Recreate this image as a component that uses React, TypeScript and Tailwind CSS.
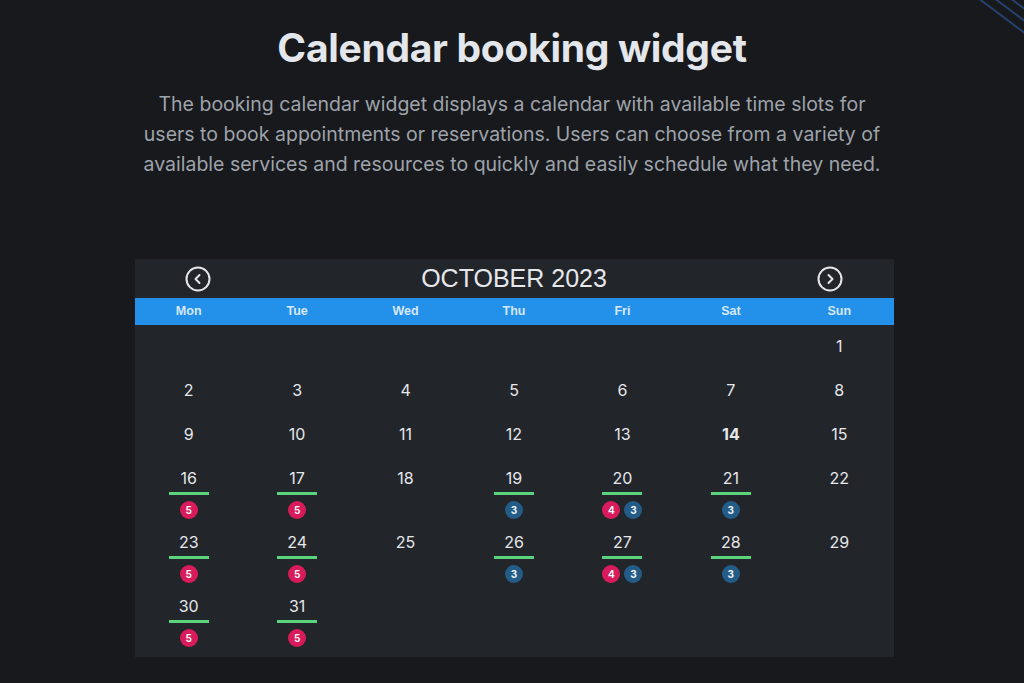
import React from 'react';

type Day = {
  n: number;
  pink?: number;
  blue?: number;
  bar?: boolean;
  bold?: boolean;
};

const weekDays = ['Mon', 'Tue', 'Wed', 'Thu', 'Fri', 'Sat', 'Sun'];

// octobre 2023 commence un dimanche
const weeks: (Day | null)[][] = [
  [null, null, null, null, null, null, { n: 1 }],
  [{ n: 2 }, { n: 3 }, { n: 4 }, { n: 5 }, { n: 6 }, { n: 7 }, { n: 8 }],
  [{ n: 9 }, { n: 10 }, { n: 11 }, { n: 12 }, { n: 13 }, { n: 14, bold: true }, { n: 15 }],
  [
    { n: 16, bar: true, pink: 5 },
    { n: 17, bar: true, pink: 5 },
    { n: 18 },
    { n: 19, bar: true, blue: 3 },
    { n: 20, bar: true, pink: 4, blue: 3 },
    { n: 21, bar: true, blue: 3 },
    { n: 22 },
  ],
  [
    { n: 23, bar: true, pink: 5 },
    { n: 24, bar: true, pink: 5 },
    { n: 25 },
    { n: 26, bar: true, blue: 3 },
    { n: 27, bar: true, pink: 4, blue: 3 },
    { n: 28, bar: true, blue: 3 },
    { n: 29 },
  ],
  [{ n: 30, bar: true, pink: 5 }, { n: 31, bar: true, pink: 5 }, null, null, null, null, null],
];

const Badge: React.FC<{ value: number; color: 'pink' | 'blue' }> = ({ value, color }) => (
  <span
    className={
      'flex h-[18px] w-[18px] items-center justify-center rounded-full text-[10px] font-bold leading-none text-[#f3f4f6] ' +
      (color === 'pink' ? 'bg-[#d81b5b]' : 'bg-[#245c88]')
    }
  >
    {value}
  </span>
);

const CircleArrow: React.FC<{ dir: 'left' | 'right' }> = ({ dir }) => (
  <svg width="26" height="26" viewBox="0 0 26 26" fill="none">
    <circle cx="13" cy="13" r="11.5" stroke="#e5e7eb" strokeWidth="2" />
    {dir === 'left' ? (
      <path d="M14.5 9 L10.5 13 L14.5 17" stroke="#e5e7eb" strokeWidth="2" strokeLinecap="round" strokeLinejoin="round" />
    ) : (
      <path d="M11.5 9 L15.5 13 L11.5 17" stroke="#e5e7eb" strokeWidth="2" strokeLinecap="round" strokeLinejoin="round" />
    )}
  </svg>
);

const App: React.FC = () => {
  return (
    <div className="relative min-h-[683px] w-full overflow-hidden bg-[#18191c] font-['Inter',sans-serif]">
      <svg className="absolute right-0 top-0" width="90" height="40" viewBox="0 0 90 40" fill="none">
        <path d="M44 -2 L92 34" stroke="#26416b" strokeWidth="2" />
        <path d="M60 -2 L92 22" stroke="#26416b" strokeWidth="2" />
        <path d="M76 -2 L92 10" stroke="#26416b" strokeWidth="2" />
      </svg>

      <div className="flex flex-col items-center pt-[24px]">
        <h1 className="text-[39px] font-bold leading-[48px] tracking-[-0.3px] text-[#e3e6ea]">
          Calendar booking widget
        </h1>
        <p className="mt-[17px] w-[745px] text-center text-[19.5px] leading-[30px] text-[#9ea3ab]">
          The booking calendar widget displays a calendar with available time slots for users to book appointments or
          reservations. Users can choose from a variety of available services and resources to quickly and easily
          schedule what they need.
        </p>

        <div className="ml-[4px] mt-[80px] w-[759px] bg-[#22252a] pb-2">
          <div className="flex h-[39px] items-center justify-between px-[50px]">
            <CircleArrow dir="left" />
            <span className="font-['Liberation_Sans',sans-serif] text-[25px] leading-none text-[#e5e7eb]">
              OCTOBER 2023
            </span>
            <CircleArrow dir="right" />
          </div>
          <div className="grid h-[27px] grid-cols-7 items-center bg-[#2391ea]">
            {weekDays.map(d => (
              <span
                key={d}
                className="text-center font-['Liberation_Sans',sans-serif] text-[12.5px] font-bold text-[#d6e7fb]"
              >
                {d}
              </span>
            ))}
          </div>
          {weeks.map((week, i) => {
            const tall = week.some(d => d && d.bar);
            return (
              <div key={i} className={'grid grid-cols-7 ' + (tall ? 'h-[64px]' : 'h-[44px]')}>
                {week.map((d, j) => (
                  <div key={j} className="flex flex-col items-center pt-[11px]">
                    {d && (
                      <>
                        <span
                          className={
                            'text-[16px] leading-5 text-[#e5e7eb] ' + (d.bold ? 'font-bold' : 'font-normal')
                          }
                        >
                          {d.n}
                        </span>
                        {d.bar && <span className="mt-1 h-[3px] w-10 bg-[#5bd47e]" />}
                        {(d.pink || d.blue) && (
                          <div className="mt-[6px] flex gap-[4px]">
                            {d.pink && <Badge value={d.pink} color="pink" />}
                            {d.blue && <Badge value={d.blue} color="blue" />}
                          </div>
                        )}
                      </>
                    )}
                  </div>
                ))}
              </div>
            );
          })}
        </div>
      </div>
    </div>
  );
};

export default App;
